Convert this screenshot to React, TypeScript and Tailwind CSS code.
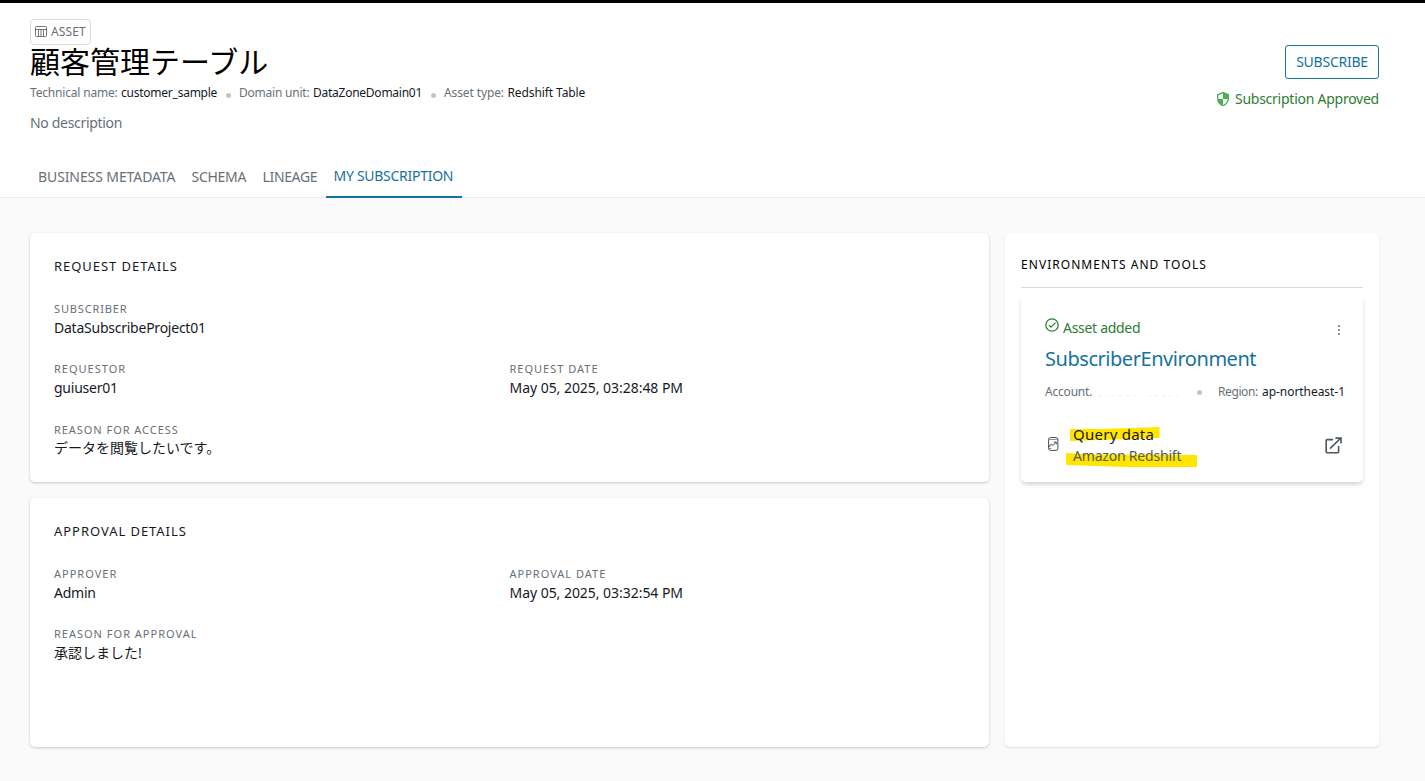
import { ReactNode } from "react";
import clsx from "clsx";
import { MdSecurity } from "react-icons/md";

interface FieldProps {
  label: string;
  labelClass?: string;
  value: string;
  valueClass?: string;
}

const tabs = [
  { label: "BUSINESS METADATA", width: "w-[153.5px]", tracking: "tracking-[-0.1px]" },
  { label: "SCHEMA", width: "w-[71px]", tracking: "tracking-[-0.3px]" },
  { label: "LINEAGE", width: "w-[71px]", tracking: "tracking-[-0.35px]" },
  { label: "MY SUBSCRIPTION", width: "w-[136px]", tracking: "tracking-[-0.28px]", active: true },
];

function Field({ label, labelClass, value, valueClass }: FieldProps) {
  return (
    <div className="w-1/2">
      <div className={clsx("h-4 whitespace-nowrap text-[11px] leading-4 text-[#687078]", labelClass || "tracking-[1px]")}>
        {label}
      </div>
      <div className={clsx("mt-px mb-px h-5 whitespace-nowrap text-[14px] leading-5 text-[#16191f]", valueClass || "tracking-[-0.24px]")}>
        {value}
      </div>
    </div>
  );
}

function Card({ title, titleClass, children }: { title: string; titleClass: string; children: ReactNode }) {
  return (
    <section className="h-[249px] rounded-[5px] bg-white px-6 pt-[23px] shadow-[0_1px_3px_rgba(0,0,0,0.2)]">
      <h2 className={clsx("h-5 text-[13px] leading-5 text-[#16191f]", titleClass)}>{title}</h2>
      {children}
    </section>
  );
}

function Dot({ className }: { className: string }) {
  return <span className={clsx("size-[5px] shrink-0 rounded-full bg-[#c1c4c9]", className)} />;
}

function TableIcon() {
  return (
    <svg className="h-3 w-[13px] shrink-0" viewBox="0 0 13 12" fill="none" stroke="#757575">
      <rect x="0.5" y="0.5" width="11" height="10" rx="0.8" />
      <path d="M0.5 3.5h11M3.5 3.5v7M6 3.5v7M8.5 3.5v7" />
    </svg>
  );
}

function CheckCircleIcon() {
  return (
    <svg className="size-[14px] shrink-0" viewBox="0 0 14 14" fill="none" stroke="#2e7d32" strokeWidth="1.3">
      <circle cx="7" cy="7" r="6.2" />
      <path d="m3.9 7.1 2.1 2.1 4.5-4.6" />
    </svg>
  );
}

function QueryIcon() {
  return (
    <svg className="h-[14px] w-[11px] shrink-0" viewBox="0 0 11 14" fill="none" stroke="#4a4f56">
      <rect x="0.6" y="0.6" width="9.3" height="12.8" rx="1.8" />
      <path d="M1 2.5h8.5M1 11.5h2.5" strokeWidth="0.6" />
      <path d="M1.8 10V8.2l2-1 1 1.4L8 5.3M5.8 5.1h2.5v2.3" />
    </svg>
  );
}

function ExternalIcon() {
  return (
    <svg className="size-[17px] shrink-0" viewBox="0 0 17 17" fill="none" stroke="#4b5563" strokeWidth="1.6">
      <path d="M8 2.6H2.2a1 1 0 0 0-1 1v11.1a1 1 0 0 0 1 1h10.4a1 1 0 0 0 1-1V9" />
      <path d="M5 11.6 15.6 1.3M10.5 1.1h5.5v5.3" />
    </svg>
  );
}

export default function App() {
  return (
    <div className="h-[781px] w-[1425px] overflow-hidden bg-[#fafafa] font-['Noto_Sans','Noto_Sans_CJK_JP',sans-serif]">
      <header className="flex h-[198px] flex-col border-t-[3px] border-b border-t-black border-b-[#ebebeb] bg-white">
        <div className="flex justify-between pr-[46px] pl-[30px]">
          <div>
            <div className="mt-4 flex h-[26px] w-[61px] items-center gap-[3px] rounded-[4px] border border-[#dcdcdc] pl-1 text-[12px] tracking-[0.1px] text-[#687078]">
              <TableIcon />
              ASSET
            </div>
            <h1 className="h-9 font-['Noto_Sans_CJK_JP',sans-serif] text-[30px] leading-[30px] whitespace-nowrap text-black">
              顧客管理テーブル
            </h1>
            <div className="flex h-6 items-center text-[12px] whitespace-nowrap text-[#687078]">
              <span className="w-[91px] tracking-[-0.18px]">Technical name:</span>
              <span className="w-[96px] tracking-[-0.24px] text-[#16191f]">customer_sample</span>
              <Dot className="mt-1 mr-2 ml-[9px]" />
              <span className="w-[74px] tracking-[-0.22px]">Domain unit:</span>
              <span className="w-[109px] tracking-[-0.25px] text-[#16191f]">DataZoneDomain01</span>
              <Dot className="mt-1 mr-2 ml-[9px]" />
              <span className="w-[63.5px] tracking-[-0.12px]">Asset type:</span>
              <span className="tracking-[-0.1px] text-[#16191f]">Redshift Table</span>
            </div>
            <p className="mt-2 h-5 text-[14px] leading-5 tracking-[-0.32px] text-[#687078]">No description</p>
          </div>
          <div className="flex flex-col items-end pt-[42px]">
            <button className="h-[34px] w-[94px] rounded-[3px] border border-[#16739c] pb-0.5 text-[14px] tracking-[-0.25px] text-[#16739c]">
              SUBSCRIBE
            </button>
            <div className="mt-[9px] flex h-5 items-center text-[14px] tracking-[-0.25px] whitespace-nowrap text-[#2e7d32]">
              <MdSecurity className="mt-0.5 mr-1 size-4 text-[#4caf50]" />
              Subscription Approved
            </div>
          </div>
        </div>
        <nav className="mt-auto -mb-px flex h-[43px] pl-[30px]">
          {tabs.map((tab) => (
            <div
              key={tab.label}
              className={clsx(
                "px-2 text-[14px] whitespace-nowrap",
                tab.width,
                tab.tracking,
                tab.active ? "border-b-2 border-[#16739c] leading-[41px] text-[#16739c]" : "leading-[43px] text-[#687078]"
              )}
            >
              {tab.label}
            </div>
          ))}
        </nav>
      </header>

      <main className="flex gap-4 pt-[35px] pr-[46px] pl-[30px]">
        <div className="flex w-[959px] flex-col gap-4">
          <Card title="REQUEST DETAILS" titleClass="tracking-[0.95px]">
            <div className="mt-[25px]">
              <Field label="SUBSCRIBER" labelClass="tracking-[0.85px]" value="DataSubscribeProject01" />
            </div>
            <div className="mt-[23px] flex">
              <Field label="REQUESTOR" value="guiuser01" />
              <Field label="REQUEST DATE" value="May 05, 2025, 03:28:48 PM" valueClass="tracking-[-0.04px]" />
            </div>
            <div className="mt-[23px]">
              <Field label="REASON FOR ACCESS" labelClass="tracking-[0.95px]" value="データを閲覧したいです。" valueClass="-translate-y-px tracking-[0px]" />
            </div>
          </Card>
          <Card title="APPROVAL DETAILS" titleClass="tracking-[0.95px]">
            <div className="mt-[25px] flex">
              <Field label="APPROVER" value="Admin" />
              <Field label="APPROVAL DATE" value="May 05, 2025, 03:32:54 PM" valueClass="tracking-[-0.04px]" />
            </div>
            <div className="mt-[22px]">
              <Field label="REASON FOR APPROVAL" value="承認しました!" valueClass="tracking-[0px]" />
            </div>
          </Card>
        </div>

        <aside className="h-[514px] w-[374px] rounded-[5px] bg-white px-4 pt-[22px] shadow-[0_1px_2px_rgba(0,0,0,0.12)]">
          <h2 className="h-5 text-[12px] leading-5 tracking-[1.05px] text-black">ENVIRONMENTS AND TOOLS</h2>
          <div className="mt-3 h-px bg-[#dcdcdc]" />
          <div className="mt-[7px] flex h-[187px] flex-col rounded-[5px] pl-6 shadow-[0_3px_5px_-1px_rgba(0,0,0,0.2)]">
            <div className="flex h-[43px] shrink-0 items-start pt-[23px] text-[14px] leading-5 tracking-[-0.3px] text-[#2e7d32]">
              <CheckCircleIcon />
              <span className="ml-1">Asset added</span>
              <svg className="mt-1.5 mr-[22px] ml-auto h-3 w-1 shrink-0" viewBox="0 0 4 12" fill="#8f8f8f">
                <path d="M1 1h2v2H1ZM1 5h2v2H1ZM1 9h2v2H1Z" />
              </svg>
            </div>
            <h3 className="mt-[7px] h-7 text-[20px] leading-7 tracking-[-0.46px] text-[#16739c]">SubscriberEnvironment</h3>
            <div className="mt-[7px] flex h-6 items-center text-[12px] whitespace-nowrap text-[#687078]">
              <span className="w-[51px] tracking-[-0.2px]">Account.</span>
              {/* leftovers of the masked account id */}
              <svg className="mt-1.5 mr-[19px] h-1 w-[82px]" viewBox="0 0 82 4" stroke="#f0f0f0">
                <path d="M2 2.5h3M9 2.5h2M15 2.5h4M23 2.5h3M30 2.5h3M37 2.5h4M52 2.5h3M58 2.5h4M66 2.5h3M73 2.5h3M80 2.5h2" />
              </svg>
              <Dot className="mr-4" />
              <span className="w-[44px] tracking-[-0.4px]">Region:</span>
              <span className="tracking-[-0.05px] text-[#16191f]">ap-northeast-1</span>
            </div>
            <div className="relative mt-[19px] flex h-11 items-center">
              <svg className="absolute top-0 left-[20px] h-11 w-[137px]" viewBox="0 0 137 44" fill="#ffe500">
                <path d="M5 6 36 6 94.5 4V15L50 16.5 5 18ZM1 30l28 1.5 103 .5v12H62L1 42Z" />
              </svg>
              <div className="relative mb-0.5 ml-[3px]">
                <QueryIcon />
              </div>
              <div className="relative ml-[14px]">
                <div className="h-[22px] text-[15px] leading-[22px] tracking-[0.25px] text-[#16191f]">Query data</div>
                <div className="h-[22px] text-[14px] leading-[22px] tracking-[-0.2px] text-[#555c52]">Amazon Redshift</div>
              </div>
              <div className="mr-[21px] ml-auto">
                <ExternalIcon />
              </div>
            </div>
          </div>
        </aside>
      </main>
    </div>
  );
}
